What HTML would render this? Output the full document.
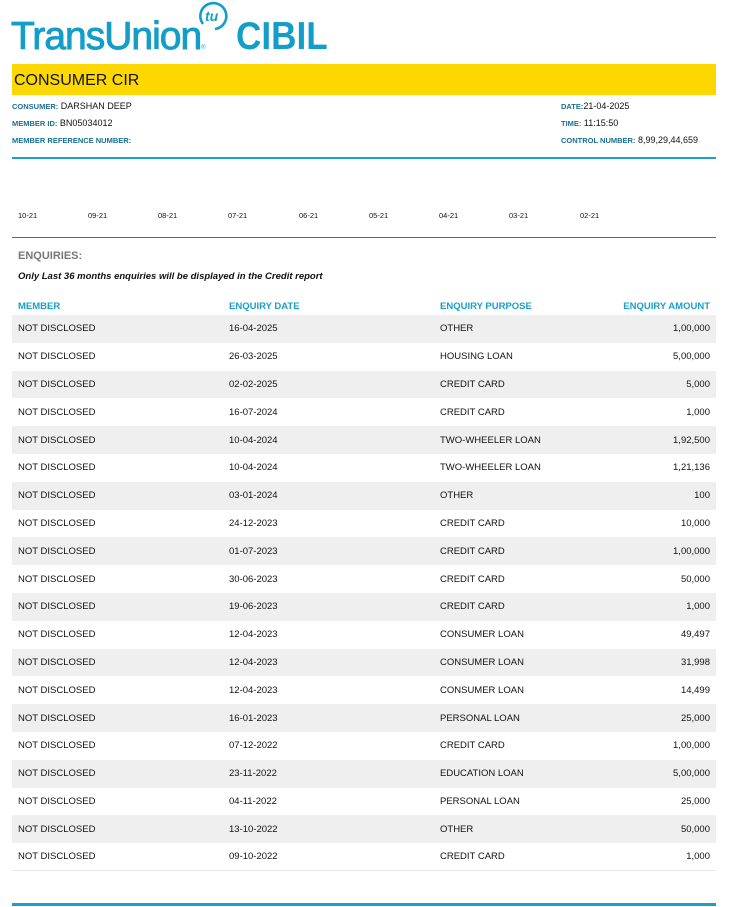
<!DOCTYPE html>
<html><head><meta charset="utf-8"><style>
*{margin:0;padding:0;box-sizing:border-box}
body{width:740px;height:907px;background:#fff;font-family:"Liberation Sans",Arial,sans-serif;position:relative;overflow:hidden;color:#111}
.logo{position:absolute;left:11px;top:15px;color:#139ec9;font-size:39px;letter-spacing:-1px;line-height:44px;white-space:nowrap;-webkit-text-stroke:0.9px #139ec9}
.cibil{position:absolute;left:236px;top:15px;color:#139ec9;font-size:39px;font-weight:bold;line-height:44px;transform:scaleX(0.9);transform-origin:left}
.bar{position:absolute;left:12px;top:64px;width:704px;height:31px;background:#fcd800;font-size:16px;padding:8px 0 0 2px;color:#111}
.lbl{font-size:7.5px;font-weight:bold;color:#1a6f94}
.info{position:absolute;font-size:9px;line-height:17px}
.hr{position:absolute;left:12px;width:704px}
.m{position:absolute;top:211px;font-size:7.5px}
.h{position:absolute;left:18px;top:250px;font-size:11px;font-weight:bold;color:#777}
.it{position:absolute;left:18px;top:271px;font-size:9.5px;font-weight:bold;font-style:italic}
table{position:absolute;left:12px;top:301px;width:704px;border-collapse:collapse;font-size:9.5px}
th{color:#1aa0c8;font-size:9.5px;text-align:left;height:14px;padding:0 6px;vertical-align:top}
td{height:27.8px;padding:0 6px}
tr.g td{background:#efefef}
tr:last-child td{border-bottom:1px solid #e8e8e8}
.r{text-align:right}
</style></head><body>
<div class="logo">TransUnion<span style="font-size:6px;letter-spacing:0;-webkit-text-stroke:0">®</span></div>
<svg style="position:absolute;left:195px;top:0" width="40" height="34" viewBox="0 0 40 34"><path d="M8 24 A13 13 0 1 1 20 29" fill="none" stroke="#139ec9" stroke-width="2.6"/><text x="10" y="21" font-family="Liberation Sans" font-size="14" font-weight="bold" fill="#139ec9" font-style="italic">tu</text></svg>
<div class="cibil">CIBIL</div>
<div class="bar">CONSUMER CIR</div>
<div class="info" style="left:12px;top:98px"><span class="lbl">CONSUMER:</span> DARSHAN DEEP<br><span class="lbl">MEMBER ID:</span> BN05034012<br><span class="lbl">MEMBER REFERENCE NUMBER:</span></div>
<div class="info" style="left:561px;top:98px"><span class="lbl">DATE:</span>21-04-2025<br><span class="lbl">TIME:</span> 11:15:50<br><span class="lbl">CONTROL NUMBER:</span> 8,99,29,44,659</div>
<div class="hr" style="top:157px;height:2px;background:#1aa0c8"></div>
<div class="m" style="left:18px">10-21</div><div class="m" style="left:88px">09-21</div><div class="m" style="left:158px">08-21</div><div class="m" style="left:228px">07-21</div><div class="m" style="left:299px">06-21</div><div class="m" style="left:369px">05-21</div><div class="m" style="left:439px">04-21</div><div class="m" style="left:509px">03-21</div><div class="m" style="left:580px">02-21</div>
<div class="hr" style="top:237px;height:1px;background:#666"></div>
<div class="h">ENQUIRIES:</div>
<div class="it">Only Last 36 months enquiries will be displayed in the Credit report</div>
<table>
<tr><th style="width:211px">MEMBER</th><th style="width:211px">ENQUIRY DATE</th><th>ENQUIRY PURPOSE</th><th class="r" style="text-align:right">ENQUIRY AMOUNT</th></tr>
<tr class="g"><td>NOT DISCLOSED</td><td>16-04-2025</td><td>OTHER</td><td class="r">1,00,000</td></tr>
<tr><td>NOT DISCLOSED</td><td>26-03-2025</td><td>HOUSING LOAN</td><td class="r">5,00,000</td></tr>
<tr class="g"><td>NOT DISCLOSED</td><td>02-02-2025</td><td>CREDIT CARD</td><td class="r">5,000</td></tr>
<tr><td>NOT DISCLOSED</td><td>16-07-2024</td><td>CREDIT CARD</td><td class="r">1,000</td></tr>
<tr class="g"><td>NOT DISCLOSED</td><td>10-04-2024</td><td>TWO-WHEELER LOAN</td><td class="r">1,92,500</td></tr>
<tr><td>NOT DISCLOSED</td><td>10-04-2024</td><td>TWO-WHEELER LOAN</td><td class="r">1,21,136</td></tr>
<tr class="g"><td>NOT DISCLOSED</td><td>03-01-2024</td><td>OTHER</td><td class="r">100</td></tr>
<tr><td>NOT DISCLOSED</td><td>24-12-2023</td><td>CREDIT CARD</td><td class="r">10,000</td></tr>
<tr class="g"><td>NOT DISCLOSED</td><td>01-07-2023</td><td>CREDIT CARD</td><td class="r">1,00,000</td></tr>
<tr><td>NOT DISCLOSED</td><td>30-06-2023</td><td>CREDIT CARD</td><td class="r">50,000</td></tr>
<tr class="g"><td>NOT DISCLOSED</td><td>19-06-2023</td><td>CREDIT CARD</td><td class="r">1,000</td></tr>
<tr><td>NOT DISCLOSED</td><td>12-04-2023</td><td>CONSUMER LOAN</td><td class="r">49,497</td></tr>
<tr class="g"><td>NOT DISCLOSED</td><td>12-04-2023</td><td>CONSUMER LOAN</td><td class="r">31,998</td></tr>
<tr><td>NOT DISCLOSED</td><td>12-04-2023</td><td>CONSUMER LOAN</td><td class="r">14,499</td></tr>
<tr class="g"><td>NOT DISCLOSED</td><td>16-01-2023</td><td>PERSONAL LOAN</td><td class="r">25,000</td></tr>
<tr><td>NOT DISCLOSED</td><td>07-12-2022</td><td>CREDIT CARD</td><td class="r">1,00,000</td></tr>
<tr class="g"><td>NOT DISCLOSED</td><td>23-11-2022</td><td>EDUCATION LOAN</td><td class="r">5,00,000</td></tr>
<tr><td>NOT DISCLOSED</td><td>04-11-2022</td><td>PERSONAL LOAN</td><td class="r">25,000</td></tr>
<tr class="g"><td>NOT DISCLOSED</td><td>13-10-2022</td><td>OTHER</td><td class="r">50,000</td></tr>
<tr><td>NOT DISCLOSED</td><td>09-10-2022</td><td>CREDIT CARD</td><td class="r">1,000</td></tr>
</table>
<div class="hr" style="top:903px;height:3px;background:#1aa0c8"></div>
</body></html>
